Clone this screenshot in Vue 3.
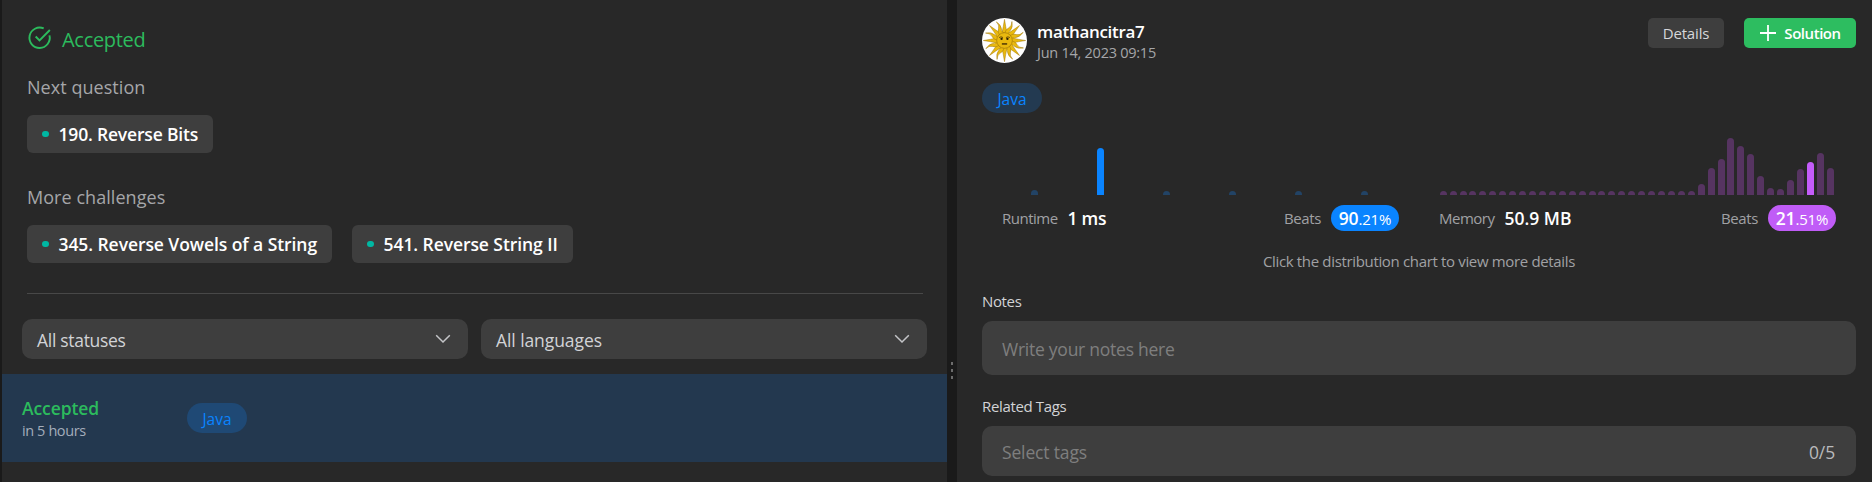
<script setup>
const runtimeBars = [5, 47, 4, 4, 4, 4]
const memoryBars = [...Array(26).fill(4), 11, 27, 36, 57, 49, 41, 19, 7, 6, 15, 26, 33, 42, 27]
const rays = Array.from({ length: 16 }, (_, i) => i * 22.5)
</script>

<template>
  <div class="app">
    <section class="list">
      <header class="result">
        <svg class="check" viewBox="0 0 24 24"><path d="M22.400 9.800A10.600 10.600 0 1 1 16.400 2.600" /><path d="M8 11l4 4L22.800 4.200" /></svg>
        <span class="t title">Accepted</span>
      </header>
      <h3 class="sub"><span class="t">Next question</span></h3>
      <div class="chips">
        <a class="chip first"><i></i><span class="t">190. Reverse Bits</span></a>
      </div>
      <h3 class="sub"><span class="t">More challenges</span></h3>
      <div class="chips">
        <a class="chip"><i></i><span class="t">345. Reverse Vowels of a String</span></a>
        <a class="chip"><i></i><span class="t">541. Reverse String II</span></a>
      </div>
      <div class="rule"></div>
      <div class="filters">
        <div class="select"><span class="t statuses">All statuses</span><svg viewBox="0 0 16 10"><path d="M1.200 1.200L8 8l6.800-6.800" /></svg></div>
        <div class="select"><span class="t">All languages</span><svg viewBox="0 0 16 10"><path d="M1.200 1.200L8 8l6.800-6.800" /></svg></div>
      </div>
      <div class="row">
        <div class="status">
          <span class="t ok">Accepted</span>
          <span class="t when">in 5 hours</span>
        </div>
        <span class="lang on"><span class="t">Java</span></span>
      </div>
    </section>

    <div class="gutter"><i></i><i></i><i></i></div>

    <section class="detail">
      <header class="top">
        <svg class="avatar" viewBox="0 0 46 46">
          <circle cx="23" cy="23" r="23" fill="#fff" />
          <path v-for="(a, i) in rays" :key="a" :transform="`rotate(${a} 23 23)`" :d="i % 2 ? 'M20.500 16Q19.500 12.500 22 9.500T22.600 2.200Q26 7.500 24.600 11T26 16Z' : 'M20.300 16Q21.800 9 23 1.400Q24.200 9 25.700 16Z'" fill="#e9b90f" stroke="#a27a0a" stroke-width=".5" />
          <circle cx="23" cy="23" r="8" fill="#e9b90f" stroke="#a27a0a" stroke-width=".7" />
          <path d="M17.500 20q2-1.500 4 0M24.500 20q2-1.500 4 0" stroke="#6b4e05" fill="none" />
          <circle cx="20" cy="21.300" r="1.200" fill="#2d2205" /><circle cx="26" cy="21.300" r="1.200" fill="#2d2205" />
          <path d="M20.300 26.500h5.400" stroke="#4b3504" stroke-width="1.500" />
        </svg>
        <div class="who">
          <span class="t name">mathancitra7</span>
          <span class="t date">Jun 14, 2023 09:15</span>
        </div>
        <button class="btn"><span class="t">Details</span></button>
        <button class="btn go"><svg viewBox="0 0 16 16"><path d="M8 0v16M0 8h16" /></svg><span class="t">Solution</span></button>
      </header>
      <span class="lang"><span class="t">Java</span></span>

      <div class="charts">
        <div class="chart runtime">
          <div class="bars"><i v-for="(h, i) in runtimeBars" :key="i" :class="{ hot: i === 1 }" :style="{ height: h + 'px' }"></i></div>
          <div class="stat"><span class="t lbl">Runtime</span><b class="t val">1 ms</b><span class="t lbl beats">Beats</span><span class="pct"><span class="t"><b>90</b>.21%</span></span></div>
        </div>
        <div class="chart memory">
          <div class="bars"><i v-for="(h, i) in memoryBars" :key="i" :class="{ hot: i === 37 }" :style="{ height: h + 'px' }"></i></div>
          <div class="stat"><span class="t lbl">Memory</span><b class="t val mb">50.9 MB</b><span class="t lbl beats">Beats</span><span class="pct"><span class="t"><b>21</b>.51%</span></span></div>
        </div>
      </div>
      <p class="hint"><span class="t">Click the distribution chart to view more details</span></p>

      <label class="field"><span class="t">Notes</span></label>
      <div class="input notes"><span class="t">Write your notes here</span></div>
      <label class="field related"><span class="t">Related Tags</span></label>
      <div class="input tags"><span class="t">Select tags</span><span class="t count">0/5</span></div>
    </section>
  </div>
</template>

<style>
body { background: #1a1a1a; }
</style>
<style scoped>
.app { display: flex; height: 482px; padding-left: 2px; box-sizing: border-box; overflow: hidden; background: #1a1a1a; font-family: "Open Sans", "Noto Sans", sans-serif; color: #eff1f6; }
.t { white-space: pre; }
.list { width: 945px; background: #282828; }
.result { display: flex; height: 28px; margin: 25px 0 0 26px; }
.title { font-size: 20px; line-height: 30px; color: #2cbb5d; margin-left: 11px; font-weight: 500; letter-spacing: -.3px; }
.check { width: 23px; height: 23px; margin-top: 1px; fill: none; stroke: #2cbb5d; stroke-width: 2; overflow: visible; }
.sub { margin: 22px 0 0 25px; height: 24px; line-height: 24px; font-size: 18px; font-weight: 500; color: #a5a6a9; letter-spacing: .05px; }
.chips { display: flex; gap: 20px; margin: 16px 0 0 25px; }
.chip { display: flex; align-items: center; height: 38px; border-radius: 6px; background: #3e3e3e; padding: 0 15px; box-sizing: border-box; font-size: 17.500px; font-weight: 600; color: #fff; letter-spacing: -.07px; }
.chip.first { letter-spacing: -.18px; }
.chip i { width: 6.500px; height: 6.500px; border-radius: 50%; background: #00b8a3; margin: 0 10px 0 0; }
.chips + .sub { margin-top: 32px; }
.rule { height: 1px; background: #484848; margin: 30px 24px 0 25px; }
.filters { display: flex; gap: 13px; margin: 25px 20px 0; }
.select { flex: 1; display: flex; justify-content: space-between; align-items: center; height: 40px; box-sizing: border-box; border-radius: 10px; background: #3e3e3e; padding: 0 17px 0 15px; font-size: 17.500px; color: #d2d3d6; letter-spacing: -.08px; }
.select .t { padding-top: 1px; }
.statuses { letter-spacing: -.3px; }
.select svg { width: 16px; height: 10px; fill: none; stroke: #c4c5c8; stroke-width: 1.500; }
.row { display: flex; margin-top: 15px; height: 88px; background: #23384f; padding-left: 20px; align-items: center; }
.status { width: 165px; display: flex; flex-direction: column; }
.ok { font-size: 17.500px; font-weight: 600; color: #2cbb5d; line-height: 24px; letter-spacing: -.1px; }
.when { font-size: 14.500px; color: #a3adbb; line-height: 20px; margin-top: 1px; letter-spacing: -.4px; }
.lang { display: flex; align-items: center; justify-content: center; width: 60px; height: 30px; border-radius: 15px; background: #233a51; color: #0a84ff; font-weight: 500; }
.lang .t { font-size: 15.500px; padding-top: 1px; }
.lang.on { background: #1f4975; }
.gutter { width: 10px; display: flex; flex-direction: column; align-items: center; gap: 4px; padding-top: 362px; box-sizing: border-box; }
.gutter i { width: 2px; height: 3px; background: #6c6c6c; }
.detail { flex: 1; background: #282828; padding: 17px 16px 0 25px; box-sizing: border-box; }
.top { display: flex; align-items: flex-start; height: 46px; }
.avatar { width: 45px; height: 45px; margin-top: 1px; }
.who { display: flex; flex-direction: column; margin-left: 10px; flex: 1; }
.name { font-size: 17px; font-weight: 600; color: #fff; line-height: 24px; margin-top: 3px; letter-spacing: -.3px; }
.date { font-size: 14.500px; line-height: 18px; color: #a5a6a9; letter-spacing: -.25px; }
.btn { border: 0; padding: 0; width: 76px; height: 30px; margin-top: 1px; border-radius: 5px; background: #3e3e3e; color: #d6d7da; font: 500 15px "Open Sans", sans-serif; letter-spacing: -.15px; display: flex; align-items: center; justify-content: center; }
.go { width: 112px; margin-left: 20px; background: #2dbd60; color: #fff; font-weight: 600; gap: 8px; letter-spacing: -.45px; padding-left: 1px; }
.go svg { width: 16px; height: 16px; stroke: #fff; stroke-width: 1.800; }
.top + .lang { margin-top: 20px; }
.charts { display: flex; }
.runtime { width: 397px; margin-left: 20px; }
.memory { width: 397px; margin-left: 40px; }
.bars { display: flex; height: 82px; align-items: flex-end; justify-content: space-between; }
.runtime .bars { padding: 0 31px 0 29.400px; }
.memory .bars { padding: 0 2px 0 .700px; }
.bars i { width: 7px; background: #224365; border-radius: 4px 4px 0 0; }
.runtime .hot { background: #0a84ff; }
.memory i { background: #563461; }
.memory .hot { background: #c45cfb; }
.stat { display: flex; align-items: center; height: 26px; margin-top: 10px; }
.lbl { font-size: 15px; color: #a0a1a4; letter-spacing: -.5px; }
.val { font-size: 17.500px; font-weight: 600; color: #fff; margin-left: 10px; letter-spacing: -.3px; }
.mb { letter-spacing: 0; }
.beats { margin-left: auto; letter-spacing: -.4px; }
.pct { display: flex; align-items: center; justify-content: center; width: 68px; height: 26px; border-radius: 13px; margin-left: 10px; background: #0a84ff; color: #fff; font-size: 15px; letter-spacing: -.15px; }
.pct b { font-size: 17.500px; font-weight: 600; }
.memory .pct { background: #c05cf7; }
.hint { margin: 19px 0 0; height: 23px; line-height: 22px; font-size: 15px; text-align: center; color: #a0a1a4; letter-spacing: -.34px; }
.field { display: block; height: 20px; line-height: 20px; font-size: 15px; margin-top: 18px; color: #d2d3d6; letter-spacing: -.35px; }
.related { margin-top: 21px; }
.input { display: flex; align-items: center; justify-content: space-between; box-sizing: border-box; border-radius: 10px; background: #3e3e3e; padding: 1px 21px 0 20px; font-size: 17.500px; color: #7e7e7e; letter-spacing: -.15px; }
.notes { height: 54px; margin-top: 10px; letter-spacing: -.25px; }
.tags { height: 50px; margin-top: 10px; }
.count { color: #b9babc; }
</style>
